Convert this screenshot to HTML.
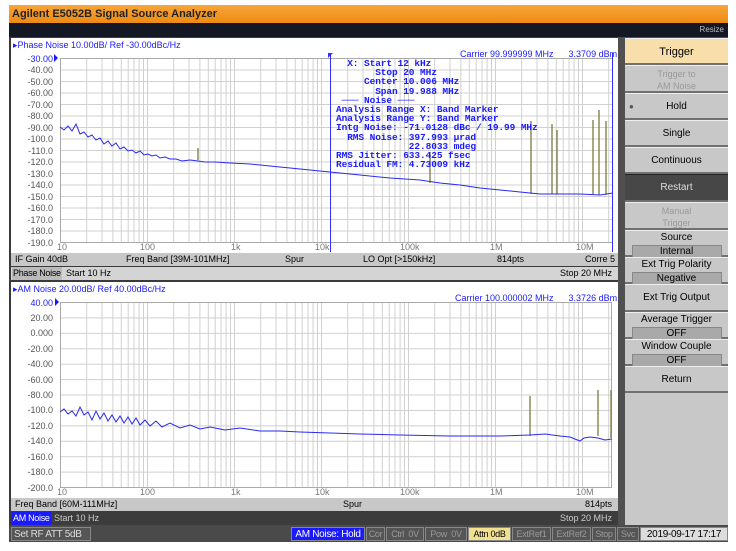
<!DOCTYPE html>
<html><head><meta charset="utf-8"><style>
body{margin:0;width:736px;height:551px;background:#fff;position:relative;overflow:hidden;font-family:"Liberation Sans",sans-serif;}
.a{position:absolute;box-sizing:border-box;}
.btn{position:absolute;left:625px;width:103px;background:#c8c8c8;border-top:1px solid #eee;border-bottom:2px solid #707070;font-size:10px;text-align:center;color:#000;box-sizing:border-box;}
.sub{display:block;margin:1px auto 0;width:88px;background:#a9a9a9;border:1px solid #888;height:12px;line-height:11px;}
.row{position:absolute;font-size:9px;height:13px;line-height:13px;color:#000;white-space:nowrap;}
.st{position:absolute;top:527px;height:14px;line-height:13px;font-size:9px;color:#999;background:#555;border:1px solid #888;box-sizing:border-box;white-space:nowrap;overflow:hidden;text-align:center;letter-spacing:-0.3px;}
</style></head><body>
<div class="a" style="left:9px;top:5px;width:719px;height:18px;background:linear-gradient(#f7a53a,#ee8a12);font-size:11px;font-weight:bold;line-height:18px;padding-left:3px;color:#222">Agilent E5052B Signal Source Analyzer</div>
<div class="a" style="left:9px;top:23px;width:719px;height:14px;background:#141824;color:#bbb;font-size:8px;text-align:right;padding-right:4px;line-height:14px">Resize</div>
<div class="a" style="left:9px;top:37px;width:613px;height:505px;background:#3a3a3a"></div>
<div class="a" style="left:618px;top:37px;width:110px;height:488px;background:#505050"></div>
<div class="a" style="left:11px;top:38px;width:607px;height:215px;background:#fff"></div>
<div class="a" style="left:11px;top:282px;width:607px;height:216px;background:#fff"></div>
<div class="a" style="left:13px;top:40px;font-size:9px;color:#1a1aff">▸Phase Noise 10.00dB/ Ref -30.00dBc/Hz</div>
<div class="a" style="left:460px;top:49px;font-size:9px;color:#1a1aff">Carrier 99.999999 MHz&nbsp;&nbsp;&nbsp;&nbsp;&nbsp;&nbsp;3.3709 dBm</div>
<svg class="a" style="left:0;top:0" width="736" height="551">
<defs>
<pattern id="vx" x="60" y="0" width="87" height="10" patternUnits="userSpaceOnUse">
<g stroke="#d0d0d0" stroke-width="1"><line x1="0.5" y1="0" x2="0.5" y2="10"/><line x1="26.7" y1="0" x2="26.7" y2="10"/><line x1="42" y1="0" x2="42" y2="10"/><line x1="52.9" y1="0" x2="52.9" y2="10"/><line x1="61.3" y1="0" x2="61.3" y2="10"/><line x1="68.2" y1="0" x2="68.2" y2="10"/><line x1="74" y1="0" x2="74" y2="10"/><line x1="79.1" y1="0" x2="79.1" y2="10"/><line x1="83.5" y1="0" x2="83.5" y2="10"/></g></pattern>
<pattern id="h1" x="0" y="58" width="10" height="11.5" patternUnits="userSpaceOnUse"><line x1="0" y1="0.5" x2="10" y2="0.5" stroke="#d0d0d0"/></pattern>
<pattern id="h3" x="0" y="302" width="10" height="15.42" patternUnits="userSpaceOnUse"><line x1="0" y1="0.5" x2="10" y2="0.5" stroke="#d0d0d0"/></pattern>
</defs>
<rect x="60" y="58" width="553" height="184" fill="url(#vx)"/>
<rect x="60" y="58" width="553" height="185" fill="url(#h1)"/>
<rect x="60.5" y="58.5" width="552" height="184" fill="none" stroke="#aaa"/>
<g font-size="9" fill="#555" text-anchor="end" font-family="Liberation Sans">
<text x="53" y="62" fill="#1a1aff">-30.00</text><text x="53" y="73">-40.00</text><text x="53" y="85">-50.00</text><text x="53" y="96">-60.00</text><text x="53" y="108">-70.00</text><text x="53" y="119">-80.00</text><text x="53" y="131">-90.00</text><text x="53" y="142">-100.0</text><text x="53" y="154">-110.0</text><text x="53" y="165">-120.0</text><text x="53" y="177">-130.0</text><text x="53" y="188">-140.0</text><text x="53" y="200">-150.0</text><text x="53" y="211">-160.0</text><text x="53" y="223">-170.0</text><text x="53" y="234">-180.0</text><text x="53" y="246">-190.0</text>
</g>
<polygon points="54,54 54,62 58,58" fill="#1a1aff"/>
<g font-size="9" fill="#777" font-family="Liberation Sans">
<text x="57" y="250">10</text><text x="140" y="250">100</text><text x="231" y="250">1k</text><text x="315" y="250">10k</text><text x="400" y="250">100k</text><text x="490" y="250">1M</text><text x="576" y="250">10M</text>
</g>
<line x1="330.5" y1="53" x2="330.5" y2="252" stroke="#3030ff"/>
<line x1="612.5" y1="53" x2="612.5" y2="252" stroke="#3030ff"/>
<polygon points="328,53 333,53 328,58" fill="#3030ff"/>
<g stroke="#7a7a40" stroke-width="1.3">
<line x1="198" y1="160" x2="198" y2="148"/><line x1="430" y1="183" x2="430" y2="152"/>
<line x1="531" y1="194" x2="531" y2="121"/><line x1="552" y1="194" x2="552" y2="124"/><line x1="557" y1="194" x2="557" y2="130"/>
<line x1="593" y1="195" x2="593" y2="120"/><line x1="599" y1="195" x2="599" y2="110"/><line x1="606" y1="195" x2="606" y2="121"/>
</g>
<polyline fill="none" stroke="#2a2af0" stroke-width="1" points="60,127 64,130 68,126 72,131 76,124 80,134 84,132 88,137 92,135 96,140 100,138 104,144 108,141 112,146 116,143 120,149 124,147 128,151 132,150 136,153 140,151 144,155 148,154 152,156 156,155 160,158 165,157 170,159 176,159 182,161 190,160 198,161 205,162 215,162 230,163 250,164 270,166 290,168 310,170 330,172 360,175 390,178 420,180 440,183 460,185 480,188 500,190 520,192 540,194 560,194 580,194 600,195 613,193"/>
<rect x="60" y="302" width="552" height="185" fill="url(#vx)"/>
<rect x="60" y="302" width="552" height="186" fill="url(#h3)"/>
<rect x="60.5" y="302.5" width="551" height="185" fill="none" stroke="#aaa"/>
<g font-size="9" fill="#555" text-anchor="end" font-family="Liberation Sans">
<text x="53" y="306" fill="#1a1aff">40.00</text><text x="53" y="321">20.00</text><text x="53" y="336">0.000</text><text x="53" y="352">-20.00</text><text x="53" y="367">-40.00</text><text x="53" y="383">-60.00</text><text x="53" y="398">-80.00</text><text x="53" y="413">-100.0</text><text x="53" y="429">-120.0</text><text x="53" y="444">-140.0</text><text x="53" y="460">-160.0</text><text x="53" y="475">-180.0</text><text x="53" y="491">-200.0</text>
</g>
<polygon points="55,298 55,306 59,302" fill="#1a1aff"/>
<g font-size="9" fill="#777" font-family="Liberation Sans">
<text x="57" y="495">10</text><text x="140" y="495">100</text><text x="231" y="495">1k</text><text x="315" y="495">10k</text><text x="400" y="495">100k</text><text x="490" y="495">1M</text><text x="576" y="495">10M</text>
</g>
<g stroke="#7a7a40" stroke-width="1.3">
<line x1="530" y1="436" x2="530" y2="396"/><line x1="598" y1="436" x2="598" y2="390"/><line x1="611" y1="438" x2="611" y2="390"/>
</g>
<polyline fill="none" stroke="#2a2af0" stroke-width="1" points="60,412 64,409 68,414 72,411 76,416 80,407 84,415 88,412 92,420 96,411 100,419 104,413 108,421 112,415 116,422 120,416 124,423 128,417 132,424 136,418 140,425 145,420 150,426 156,421 162,427 170,423 180,428 190,425 200,429 210,427 225,430 240,428 260,431 280,431 300,432 330,433 360,434 400,435 450,436 500,436 530,435 545,434 560,436 570,437 580,441 584,438 590,437 598,438 605,440 612,439"/>
</svg>
<div class="a" style="left:336px;top:59px;font-family:'Liberation Mono',monospace;font-size:9.5px;line-height:9.2px;color:#1a1aff;white-space:pre;font-weight:bold;letter-spacing:-0.1px">  X: Start 12 kHz
       Stop 20 MHz
     Center 10.006 MHz
       Span 19.988 MHz
 ─── Noise ───
Analysis Range X: Band Marker
Analysis Range Y: Band Marker
Intg Noise: -71.0128 dBc / 19.99 MHz
  RMS Noise: 397.993 µrad
             22.8033 mdeg
RMS Jitter: 633.425 fsec
Residual FM: 4.73009 kHz</div>
<div class="a" style="left:11px;top:253px;width:607px;height:13px;background:#c8c8c8"></div>
<div class="row" style="left:15px;top:253px">IF Gain 40dB</div>
<div class="row" style="left:126px;top:253px">Freq Band [39M-101MHz]</div>
<div class="row" style="left:285px;top:253px">Spur</div>
<div class="row" style="left:363px;top:253px">LO Opt [&gt;150kHz]</div>
<div class="row" style="left:497px;top:253px">814pts</div>
<div class="row" style="left:585px;top:253px">Corre 5</div>
<div class="a" style="left:11px;top:267px;width:607px;height:13px;background:#d4d4d4"></div>
<div class="row" style="left:12px;top:267px;background:#bbb;padding:0 1px;letter-spacing:-0.3px">Phase Noise</div>
<div class="row" style="left:66px;top:267px">Start 10 Hz</div>
<div class="row" style="left:560px;top:267px">Stop 20 MHz</div>
<div class="a" style="left:13px;top:284px;font-size:9px;color:#1a1aff">▸AM Noise 20.00dB/ Ref 40.00dBc/Hz</div>
<div class="a" style="left:455px;top:293px;font-size:9px;color:#1a1aff">Carrier 100.000002 MHz&nbsp;&nbsp;&nbsp;&nbsp;&nbsp;&nbsp;3.3726 dBm</div>
<div class="a" style="left:11px;top:498px;width:607px;height:13px;background:#c8c8c8"></div>
<div class="row" style="left:15px;top:498px">Freq Band [60M-111MHz]</div>
<div class="row" style="left:343px;top:498px">Spur</div>
<div class="row" style="left:585px;top:498px">814pts</div>
<div class="a" style="left:11px;top:512px;width:607px;height:13px;background:#3c3c3c"></div>
<div class="row" style="left:12px;top:512px;background:#1a1aff;color:#fff;padding:0 1px;letter-spacing:-0.3px">AM Noise</div>
<div class="row" style="left:54px;top:512px;color:#ccc">Start 10 Hz</div>
<div class="row" style="left:560px;top:512px;color:#ccc">Stop 20 MHz</div>
<div class="a" style="left:9px;top:525px;width:719px;height:17px;background:#4a4a4a"></div>
<div class="st" style="left:11px;width:80px;color:#ddd;font-size:10px;text-align:left;padding-left:2px">Set RF ATT 5dB</div>
<div class="st" style="left:291px;width:74px;background:#1a1aff;color:#fff;font-size:10px">AM Noise: Hold</div>
<div class="st" style="left:366px;width:19px">Cor</div>
<div class="st" style="left:386px;width:38px">Ctrl&nbsp;&nbsp;0V</div>
<div class="st" style="left:425px;width:42px">Pow&nbsp;&nbsp;0V</div>
<div class="st" style="left:468px;width:43px;background:#f0e090;color:#000">Attn 0dB</div>
<div class="st" style="left:512px;width:39px">ExtRef1</div>
<div class="st" style="left:552px;width:39px">ExtRef2</div>
<div class="st" style="left:592px;width:24px">Stop</div>
<div class="st" style="left:617px;width:22px">Svc</div>
<div class="st" style="left:640px;width:88px;background:#ddd;color:#000;font-size:10px">2019-09-17 17:17</div>
<div class="btn" style="top:38px;height:27px;line-height:26px;background:#f7deaa;font-size:11px">Trigger</div>
<div class="btn" style="top:65px;height:28px;padding-top:2px;color:#999;font-size:9px;line-height:12px">Trigger to<br>AM Noise</div>
<div class="btn" style="top:93px;height:27px;line-height:25px">Hold<span style="position:absolute;left:4px;font-size:8px;color:#555">●</span></div>
<div class="btn" style="top:120px;height:27px;line-height:25px">Single</div>
<div class="btn" style="top:147px;height:27px;line-height:25px">Continuous</div>
<div class="btn" style="top:174px;height:28px;line-height:26px;background:#474747;color:#ddd;border-top:1px solid #222">Restart</div>
<div class="btn" style="top:202px;height:28px;padding-top:2px;color:#999;font-size:9px;line-height:12px">Manual<br>Trigger</div>
<div class="btn" style="top:230px;height:27px;line-height:12px;padding-top:1px">Source<span class="sub">Internal</span></div>
<div class="btn" style="top:257px;height:27px;line-height:12px;padding-top:1px">Ext Trig Polarity<span class="sub">Negative</span></div>
<div class="btn" style="top:284px;height:28px;line-height:26px">Ext Trig Output</div>
<div class="btn" style="top:312px;height:27px;line-height:12px;padding-top:1px">Average Trigger<span class="sub">OFF</span></div>
<div class="btn" style="top:339px;height:27px;line-height:12px;padding-top:1px">Window Couple<span class="sub">OFF</span></div>
<div class="btn" style="top:366px;height:27px;line-height:25px">Return</div>
<div class="a" style="left:625px;top:393px;width:103px;height:132px;background:#c8c8c8"></div>
</body></html>
